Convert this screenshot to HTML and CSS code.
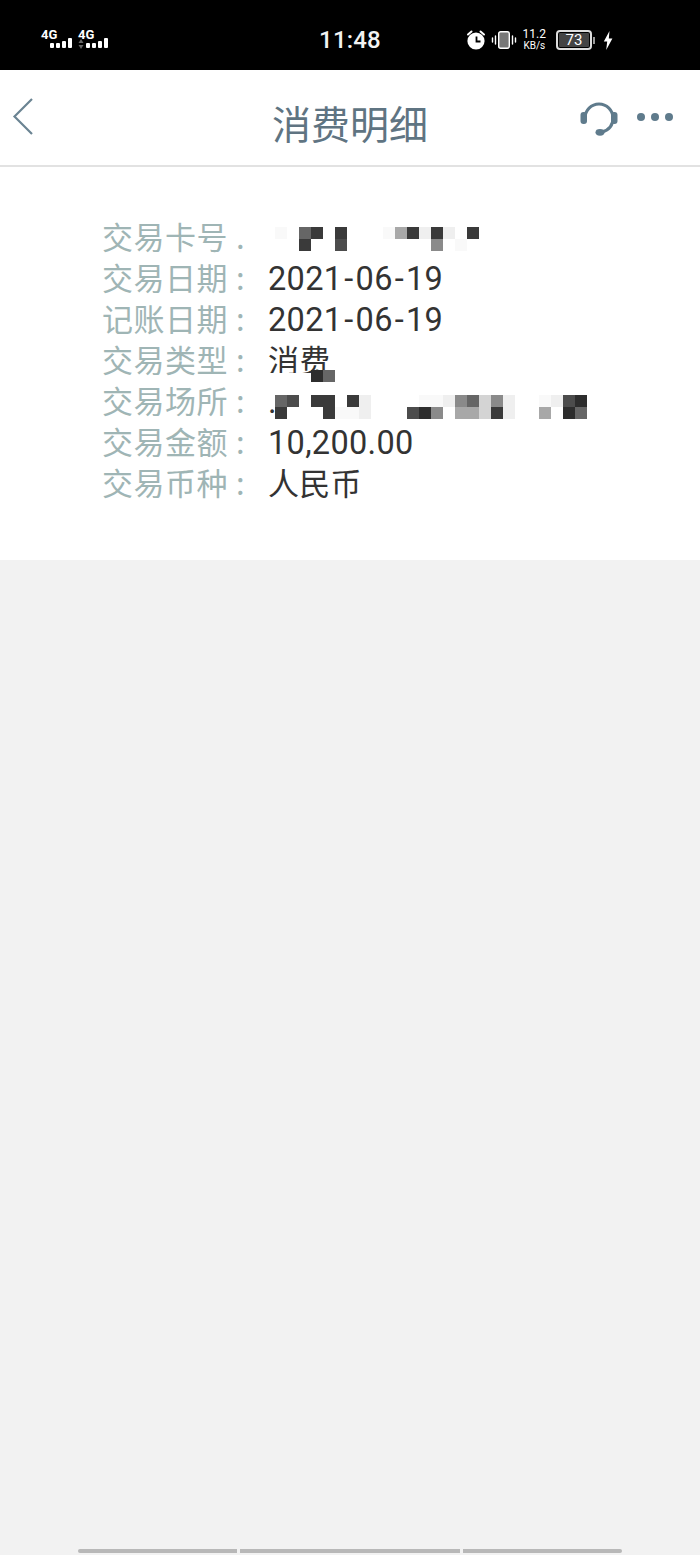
FILE: index.html
```html
<!DOCTYPE html>
<html lang="zh-CN">
<head>
    <meta charset="UTF-8">
    <meta name="viewport" content="width=device-width, initial-scale=1.0">
    <title>消费明细</title>
    <link rel="stylesheet" href="styles.css">
</head>
<body>
    <!-- Phone status bar -->
    <div class="status-bar">
        <div class="signals">
            <div class="signal">
                <span class="signal-label">4G</span>
                <div class="signal-bars"><i class="b1"></i><i class="b2"></i><i class="b3"></i><i class="b4"></i></div>
            </div>
            <div class="signal">
                <span class="signal-label">4G</span>
                <svg class="signal-arrows" width="6" height="10" viewBox="0 0 6 10">
                    <path d="M3 0 L5.5 4 H0.5 Z M3 10 L5.5 6 H0.5 Z" fill="#666"/>
                </svg>
                <div class="signal-bars"><i class="b1"></i><i class="b2"></i><i class="b3"></i><i class="b4"></i></div>
            </div>
        </div>
        <div class="clock">11:48</div>
        <div class="status-icons">
            <svg class="icon-alarm" width="22" height="22" viewBox="0 0 22 22">
                <circle cx="11" cy="12" r="8.6" fill="#fff"/>
                <path d="M3 5.5 L6.5 2.5 M19 5.5 L15.5 2.5" stroke="#fff" stroke-width="2" stroke-linecap="round"/>
                <path d="M11.5 7.5 V12.5 H15.5" fill="none" stroke="#000" stroke-width="1.8"/>
            </svg>
            <svg class="icon-vibrate" width="26" height="20" viewBox="0 0 26 20">
                <rect x="7.7" y="1.7" width="10.6" height="16.6" rx="2" fill="#777" stroke="#fff" stroke-width="1.4"/>
                <path d="M4.5 6 V14 M1.5 8 V12 M21.5 6 V14 M24.5 8 V12" stroke="#fff" stroke-width="1.4" stroke-linecap="round"/>
            </svg>
            <div class="speed"><span>11.2</span><span class="speed-unit">KB/s</span></div>
            <div class="battery">
                <div class="battery-body"><span class="battery-level">73</span></div>
                <i class="battery-cap"></i>
            </div>
            <svg class="icon-bolt" width="10" height="19" viewBox="0 0 10 19">
                <path d="M6.5 0 L0.8 10.5 H4.2 L3.2 19 L9.4 7.5 H5.8 Z" fill="#fff"/>
            </svg>
        </div>
    </div>

    <!-- Title bar -->
    <div class="title-bar">
        <svg class="icon-back" width="22" height="40" viewBox="0 0 22 40">
            <path d="M20 2 L2.5 19.5 L20 37" fill="none" stroke="#6b8493" stroke-width="2.2"/>
        </svg>
        <div class="page-title">消费明细</div>
        <div class="title-actions">
            <svg class="icon-service" width="38" height="36" viewBox="0 0 38 36">
                <path d="M5 17 A14 14 0 0 1 33 17 C33 24 29 29 22 31" fill="none" stroke="#5f7b8c" stroke-width="3"/>
                <rect x="0.5" y="11" width="6.5" height="12" rx="3" fill="#5f7b8c"/>
                <rect x="31" y="11" width="6.5" height="12" rx="3" fill="#5f7b8c"/>
                <ellipse cx="20" cy="31.3" rx="4.5" ry="3.4" fill="#5f7b8c"/>
            </svg>
            <div class="more-dots"><i></i><i></i><i></i></div>
        </div>
    </div>

    <!-- Detail card -->
    <div class="detail-card">
        <div class="detail-row">
            <span class="detail-label">交易卡号<span class="colon">.</span></span>
            <div class="detail-value">
                <div class="mosaic mosaic-card">
                    <i class="s9"></i><i></i><i class="s4"></i><i class="s2"></i><i></i><i class="s2"></i><i></i><i></i><i></i><i class="s9"></i><i class="s6"></i><i class="s2"></i><i class="s8"></i><i class="s2"></i><i class="s8"></i><i></i><i class="s2"></i>
                    <i></i><i></i><i class="s2"></i><i></i><i></i><i class="s3"></i><i></i><i></i><i></i><i></i><i></i><i></i><i></i><i class="s5"></i><i></i><i class="s9"></i><i></i>
                </div>
            </div>
        </div>
        <div class="detail-row">
            <span class="detail-label">交易日期<span class="colon">:</span></span>
            <div class="detail-value detail-num">2021<span class="dash">-</span>06<span class="dash">-</span>19</div>
        </div>
        <div class="detail-row">
            <span class="detail-label">记账日期<span class="colon">:</span></span>
            <div class="detail-value detail-num">2021<span class="dash">-</span>06<span class="dash">-</span>19</div>
        </div>
        <div class="detail-row">
            <span class="detail-label">交易类型<span class="colon">:</span></span>
            <div class="detail-value">
                消费
                <div class="mosaic mosaic-type"><i class="mask"></i><i class="s1"></i><i class="s4"></i></div>
            </div>
        </div>
        <div class="detail-row">
            <span class="detail-label">交易场所<span class="colon">:</span></span>
            <div class="detail-value detail-num">
                <span class="value-dot">.</span>
                <div class="mosaic mosaic-place">
                    <i class="s4"></i><i class="s3"></i><i></i><i class="s2"></i><i class="s2"></i><i></i><i class="s2"></i><i class="s8"></i><i></i><i></i><i></i><i></i><i class="s9"></i><i class="s9"></i><i class="s8"></i><i class="s5"></i><i class="s4"></i><i class="s7"></i><i class="s5"></i><i class="s8"></i><i></i><i></i><i class="s9"></i><i class="s8"></i><i class="s3"></i><i class="s1"></i>
                    <i class="s2"></i><i></i><i></i><i></i><i class="s2"></i><i class="s9"></i><i class="s9"></i><i class="s8"></i><i></i><i></i><i></i><i class="s3"></i><i class="s1"></i><i class="s5"></i><i></i><i class="s6"></i><i class="s6"></i><i class="s7"></i><i class="s2"></i><i class="s8"></i><i></i><i></i><i class="s6"></i><i></i><i class="s1"></i><i class="s4"></i>
                </div>
            </div>
        </div>
        <div class="detail-row">
            <span class="detail-label">交易金额<span class="colon">:</span></span>
            <div class="detail-value detail-num">10,200.00</div>
        </div>
        <div class="detail-row">
            <span class="detail-label">交易币种<span class="colon">:</span></span>
            <div class="detail-value">人民币</div>
        </div>
    </div>

    <!-- Empty page area -->
    <div class="page-rest">
        <div class="scroll-marks"><i class="mark-a"></i><i class="mark-b"></i><i class="mark-c"></i></div>
    </div>
</body>
</html>
```

FILE: styles.css
```css
* {
    margin: 0;
    padding: 0;
    box-sizing: border-box;
}

body {
    font-family: "Noto Sans CJK SC", "Noto Sans", sans-serif;
    background: #f2f2f2;
    height: 1555px;
    display: flex;
    flex-direction: column;
    overflow: hidden;
}

i {
    display: block;
}

/* Status bar */
.status-bar {
    height: 70px;
    background: #000;
    color: #fff;
    display: grid;
    grid-template-columns: 1fr auto 1fr;
    align-items: center;
    padding-top: 10px;
    font-family: Roboto, sans-serif;
}

.signals {
    display: flex;
    gap: 6px;
    padding-left: 41px;
    margin-bottom: 2px;
}

.signal {
    width: 31px;
    height: 20px;
    position: relative;
}

.signal + .signal {
    width: 30px;
}

.signal-label {
    position: absolute;
    left: 0;
    top: 0;
    font-size: 13px;
    line-height: 12px;
    font-weight: 700;
}

.signal-arrows {
    position: absolute;
    left: 0;
    bottom: 0;
}

.signal-bars {
    position: absolute;
    right: 0;
    bottom: 1px;
    display: flex;
    align-items: flex-end;
    gap: 2px;
}

.signal-bars i {
    width: 4px;
    background: #fff;
    border-radius: 1px;
}

.b1 { height: 5px; }
.b2 { height: 5px; }
.b3 { height: 7px; }
.b4 { height: 10px; }

.clock {
    font-size: 24px;
    font-weight: 500;
    letter-spacing: 0.2px;
    color: #f2f2f2;
}

.status-icons {
    display: flex;
    align-items: center;
    justify-content: flex-end;
    padding-right: 87px;
}

.icon-vibrate {
    margin-left: 4px;
}

.speed {
    display: flex;
    flex-direction: column;
    align-items: center;
    font-size: 12px;
    line-height: 11px;
    margin: 0 10px 0 6px;
}

.speed-unit {
    font-size: 10px;
}

.battery {
    display: flex;
    align-items: center;
    gap: 1px;
    margin-right: 8px;
}

.battery-body {
    width: 36px;
    height: 20px;
    border: 2px solid #ddd;
    border-radius: 4px;
    padding: 1px;
    display: flex;
}

.battery-level {
    flex: 1;
    background: #444;
    border-radius: 1px;
    font-size: 15px;
    line-height: 14px;
    text-align: center;
}

.battery-cap {
    width: 2px;
    height: 7px;
    background: #999;
}

/* Title bar */
.title-bar {
    height: 97px;
    background: #fff;
    border-bottom: 2px solid #e2e2e2;
    display: flex;
    align-items: center;
    justify-content: center;
    position: relative;
}

.icon-back {
    position: absolute;
    left: 12px;
    top: 27px;
}

.page-title {
    font-size: 39px;
    line-height: 50px;
    color: #5f7482;
    margin-top: 9px;
}

.title-actions {
    position: absolute;
    left: 580px;
    top: 31px;
    display: flex;
    align-items: center;
    gap: 19px;
}

.more-dots {
    display: flex;
    gap: 6px;
    margin-bottom: 4px;
}

.more-dots i {
    width: 8px;
    height: 8px;
    border-radius: 50%;
    background: #5f7b8c;
}

/* Detail card */
.detail-card {
    background: #fff;
    height: 393px;
    padding: 48px 0 0 102px;
}

.detail-row {
    display: flex;
    align-items: center;
    height: 41px;
}

.detail-label {
    width: 166px;
    flex: none;
    display: flex;
    font-size: 31px;
    line-height: 41px;
    letter-spacing: 0.5px;
    color: #9fb5b5;
}

.colon {
    margin-left: 8px;
}

.detail-value {
    position: relative;
    font-size: 31px;
    line-height: 41px;
    letter-spacing: 0.3px;
    color: #333;
    white-space: nowrap;
}

.detail-num {
    font-family: Roboto, "Noto Sans CJK SC", sans-serif;
    font-size: 32.5px;
    padding-top: 6px;
}

.dash {
    margin: 0 2px;
}

.value-dot {
    color: #333;
}

/* Blurred squares over the private values */
.mosaic {
    display: grid;
    grid-auto-rows: 12px;
    filter: blur(0.4px);
}

.mosaic i {
    background: #fff;
}

.mosaic-card {
    grid-template-columns: repeat(17, 12px);
    margin: 7px 0 0 7px;
}

.mosaic-type {
    position: absolute;
    left: 0;
    top: 32px;
    grid-template-columns: 43px 12px 12px;
}

.mosaic i.mask {
    margin-top: 3px;
}

.mosaic-place {
    position: absolute;
    left: 7px;
    top: 19px;
    grid-template-columns: repeat(26, 12px);
}

.mosaic i.s1 { background: #2d2d2d; }
.mosaic i.s2 { background: #3a3a3a; }
.mosaic i.s3 { background: #4c4c4c; }
.mosaic i.s4 { background: #666; }
.mosaic i.s5 { background: #8a8a8a; }
.mosaic i.s6 { background: #a8a8a8; }
.mosaic i.s7 { background: #d4d4d4; }
.mosaic i.s8 { background: #efefef; }
.mosaic i.s9 { background: #f9f9f9; }

/* Rest of page */
.page-rest {
    flex: 1;
    display: flex;
    align-items: flex-end;
    padding: 0 0 2px 78px;
}

.scroll-marks {
    display: flex;
    gap: 3px;
}

.scroll-marks i {
    height: 4px;
    background: #b8b8b8;
}

.mark-a {
    width: 159px;
    border-radius: 2px 0 0 2px;
}

.mark-b {
    width: 220px;
}

.mark-c {
    width: 159px;
    border-radius: 0 2px 2px 0;
}
```
